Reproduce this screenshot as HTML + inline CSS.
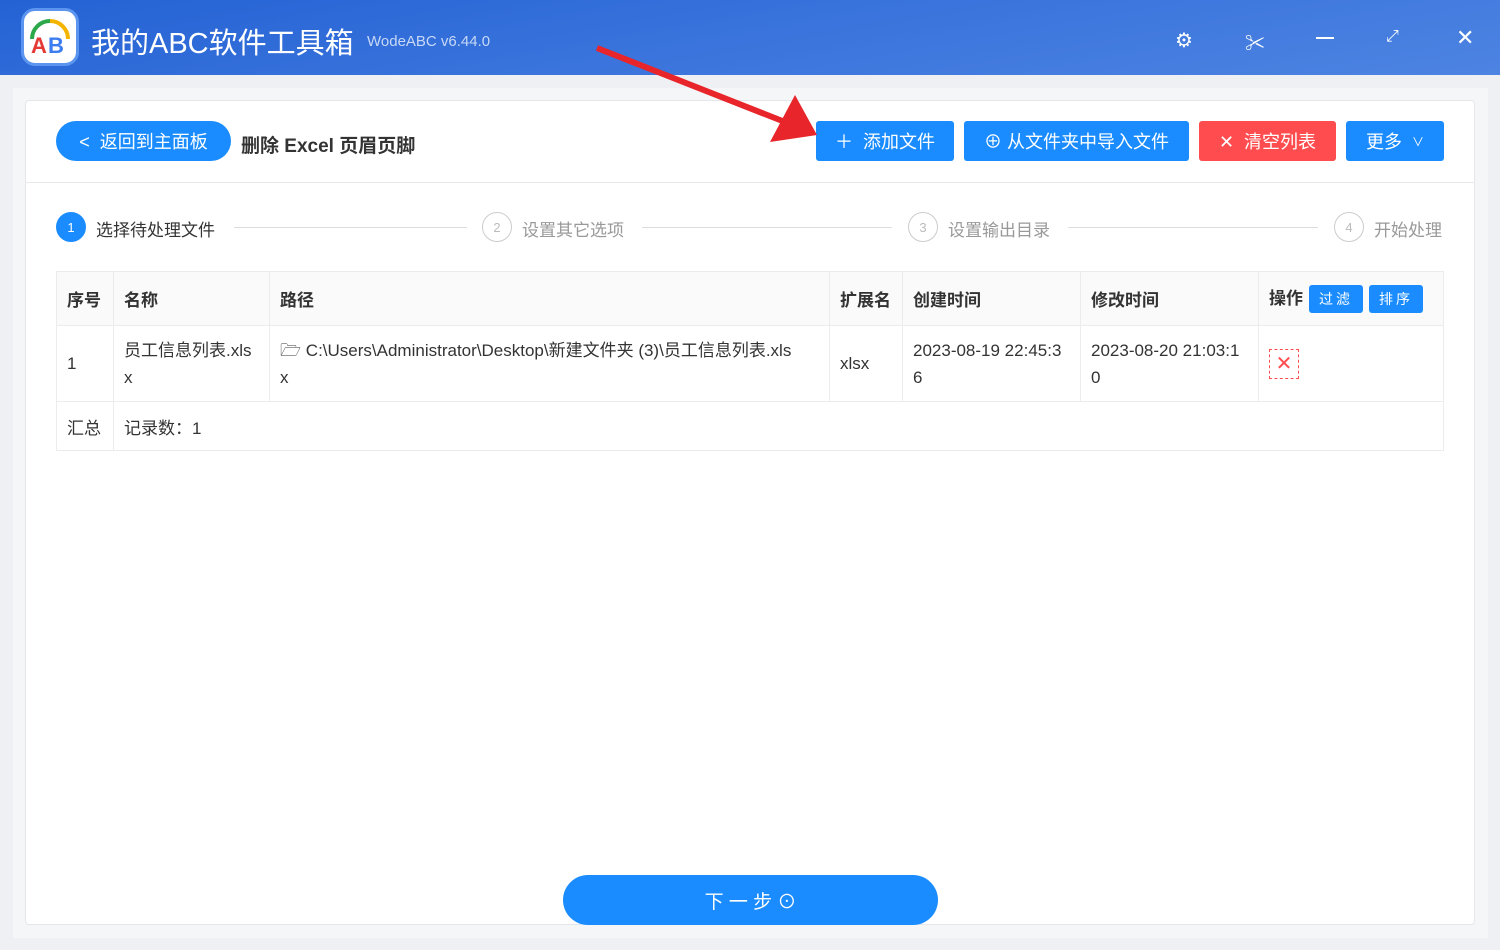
<!DOCTYPE html><html><head><meta charset="utf-8"><style>
*{box-sizing:border-box;margin:0;padding:0}
body{width:1500px;height:950px;overflow:hidden;font-family:"Liberation Sans","Noto Sans CJK SC",sans-serif;background:#eef0f4;position:relative;color:#333}
.hdr{position:absolute;left:0;top:0;width:1500px;height:75px;background:linear-gradient(170deg,#2462d4 0%,#3a74dc 50%,#4d84e2 100%)}
.logo{position:absolute;left:21px;top:8px;width:58px;height:58px;border-radius:14px;background:#fff;border:3px solid #5b95f0}
.title{position:absolute;left:91px;top:20px;color:#fff;font-size:29px}
.ver{position:absolute;left:367px;top:33px;color:#c8d8f5;font-size:15px}
.ic{position:absolute;top:28px;color:#fff}
.outer{position:absolute;left:13px;top:88px;width:1475px;height:850px;background:#f5f6f8}
.card{position:absolute;left:25px;top:100px;width:1450px;height:825px;background:#fff;border:1px solid #e4e6ea;border-radius:4px}
.tb{position:absolute;left:25px;top:182px;width:1450px;height:1px;background:#e8e8e8}
.btn{position:absolute;height:40px;color:#fff;font-size:18px;display:flex;align-items:center;justify-content:center;border-radius:3px;background:#1a8cff}
.steps span{position:absolute;font-size:17px;color:#999}
.circ{position:absolute;width:30px;height:30px;border-radius:50%;border:1px solid #ccc;color:#bbb;font-size:13px;display:flex;align-items:center;justify-content:center}
.line{position:absolute;height:1px;background:#ddd;top:227px}
table{position:absolute;left:56px;top:271px;width:1388px;border-collapse:collapse;font-size:17px}
td,th{border:1px solid #ececec;padding:0 10px;text-align:left;vertical-align:middle}
th{background:#fafafa;height:54px;font-weight:bold}
.sb{display:inline-block;background:#1a8cff;color:#fff;font-size:14px;font-weight:normal;padding:4px 10px;border-radius:3px;margin-left:6px;letter-spacing:3px;vertical-align:middle}
</style></head><body>
<div class="hdr"></div>
<div class="logo"><svg width="52" height="52" viewBox="0 0 52 52"><path d="M8 28 A18 18 0 0 1 26 10" stroke="#2aa84a" stroke-width="4" fill="none"/><path d="M26 10 A18 18 0 0 1 44 28" stroke="#f4b400" stroke-width="4" fill="none"/><text x="7" y="42" font-size="22" font-weight="bold" fill="#e53935" font-family="Liberation Sans">A</text><text x="24" y="42" font-size="22" font-weight="bold" fill="#3c7cf0" font-family="Liberation Sans">B</text></svg></div>
<div class="title">我的ABC软件工具箱</div>
<div class="ver">WodeABC v6.44.0</div>
<div class="ic" style="left:1175px;top:28px;font-size:20px">⚙</div>
<div class="ic" style="left:1245px;top:27px;font-size:20px">✂</div>
<div class="ic" style="left:1316px;top:37px;width:18px;height:2px;background:#fff"></div>
<div class="ic" style="left:1386px;top:28px;font-size:16px">⤢</div>
<div class="ic" style="left:1456px;top:25px;font-size:22px">✕</div>
<div class="outer"></div>
<div class="card"></div>
<div class="tb"></div>
<div class="btn" style="left:56px;top:121px;width:175px;border-radius:20px">&lt;&nbsp;&nbsp;返回到主面板</div>
<div style="position:absolute;left:241px;top:131px;font-size:19px;font-weight:bold">删除 Excel 页眉页脚</div>
<div class="btn" style="left:816px;top:121px;width:138px">＋&nbsp;&nbsp;添加文件</div>
<div class="btn" style="left:964px;top:121px;width:225px">⊕&nbsp;从文件夹中导入文件</div>
<div class="btn" style="left:1199px;top:121px;width:137px;background:#ff4d4f">✕&nbsp;&nbsp;清空列表</div>
<div class="btn" style="left:1346px;top:121px;width:98px">更多&nbsp;&nbsp;<span style="font-size:12px">∨</span></div>
<svg style="position:absolute;left:0;top:0" width="1500" height="950"><line x1="597" y1="48" x2="785" y2="122" stroke="#e8252a" stroke-width="6"/><polygon points="817,135 770,142 795,95" fill="#e8252a"/></svg>
<div class="steps">
<div class="circ" style="left:56px;top:212px;background:#1a8cff;border-color:#1a8cff;color:#fff">1</div><span style="left:96px;top:216px;color:#333">选择待处理文件</span>
<div class="line" style="left:234px;width:233px"></div>
<div class="circ" style="left:482px;top:212px">2</div><span style="left:522px;top:216px">设置其它选项</span>
<div class="line" style="left:642px;width:250px"></div>
<div class="circ" style="left:908px;top:212px">3</div><span style="left:948px;top:216px">设置输出目录</span>
<div class="line" style="left:1068px;width:250px"></div>
<div class="circ" style="left:1334px;top:212px">4</div><span style="left:1374px;top:216px">开始处理</span>
</div>
<table>
<tr><th style="width:57px">序号</th><th style="width:156px">名称</th><th style="width:560px">路径</th><th style="width:73px">扩展名</th><th style="width:178px">创建时间</th><th style="width:178px">修改时间</th><th>操作<span class="sb">过滤</span><span class="sb">排序</span></th></tr>
<tr style="height:76px;line-height:27px"><td>1</td><td>员工信息列表.xls<br>x</td><td>🗁 C:\Users\Administrator\Desktop\新建文件夹 (3)\员工信息列表.xls<br>x</td><td>xlsx</td><td>2023-08-19 22:45:3<br>6</td><td>2023-08-20 21:03:1<br>0</td><td><span style="display:inline-block;width:30px;height:30px;border:1px dashed #ff4d4f;color:#ff4d4f;text-align:center;line-height:28px;font-size:20px">✕</span></td></tr>
<tr style="height:49px"><td>汇总</td><td colspan="6">记录数：1</td></tr>
</table>
<div class="btn" style="left:563px;top:875px;width:375px;height:50px;border-radius:25px;font-size:19px">下 一 步 ⊙</div>
</body></html>
